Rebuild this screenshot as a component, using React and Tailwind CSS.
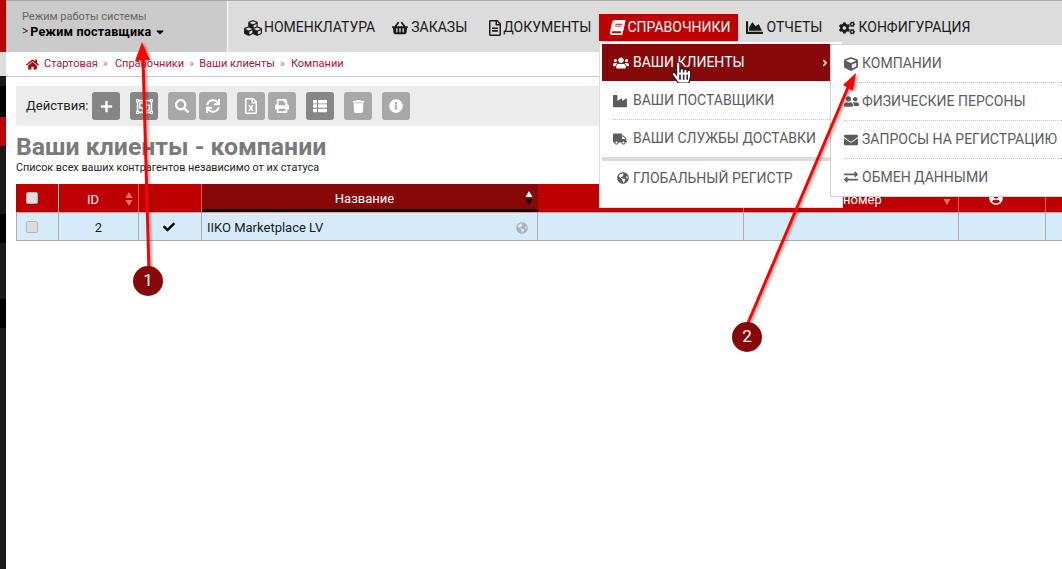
import React from "react";
import { FaHome, FaPlus, FaSearch, FaSync, FaRegFileExcel, FaPrint, FaThList, FaTrash, FaInfoCircle, FaCubes, FaShoppingBasket, FaRegFileAlt, FaBook, FaChartArea, FaCogs, FaUsers, FaIndustry, FaTruck, FaGlobeAmericas, FaCube, FaUserFriends, FaEnvelope, FaExchangeAlt, FaCheck, FaCaretDown, FaHandPointer, FaRegObjectGroup, FaUserCircle, FaAngleRight } from "react-icons/fa";

const font = { fontFamily: "Roboto, sans-serif" };

function Tool({ icon: I, dark, ml, size = "text-[14px]" }) {
  return (
    <div className={`w-7 h-7 rounded-[3px] flex items-center justify-center text-white ${size} ${dark ? "bg-[#868686]" : "bg-[#a8a8a8]"} ${ml}`}>
      <I />
    </div>
  );
}

function Nav({ icon: I, label, active, ml, iw, iconCls = "text-[16px]" }) {
  return (
    <div className={`h-[27px] flex items-center text-[14px] ${active ? "bg-[#bd0000] text-white pl-[11px] pr-[7px]" : "text-[#1a1a1a]"} ${ml}`}>
      <span className={`flex justify-start shrink-0 ${iw}`}>
        <I className={iconCls} />
      </span>
      <span>{label}</span>
    </div>
  );
}

function MenuItem({ icon: I, label, iw = "w-[20px]", size = "text-[14px]", active, cls = "h-[38px]" }) {
  return (
    <div className={`flex items-center text-[14px] ${active ? "text-white" : "text-[#5c5c5c] border-b border-dotted border-[#c4c4c4]"} ${cls}`}>
      <span className={`shrink-0 flex ${iw}`}><I className={size} /></span>
      <span className="whitespace-nowrap">{label}</span>
    </div>
  );
}

function Sort({ up = "#f07070", down = "#f07070" }) {
  return (
    <svg width="8" height="14" viewBox="0 0 8 14" className="shrink-0">
      <polygon points="4,0 7.5,6 0.5,6" fill={up} />
      <polygon points="4,14 7.5,8 0.5,8" fill={down} />
    </svg>
  );
}

function Box() {
  return <span className="block w-3 h-3 rounded-[2px] bg-[#dddddd] border border-[#b5b5b5]" />;
}

export default function App() {
  return (
    <div className="relative w-[1062px] h-[569px] overflow-hidden bg-white flex" style={font}>
      {/* Sidebar strip */}
      <div className="w-[6px] h-full bg-[#1a1a1a] flex flex-col shrink-0">
        <div className="h-[52px] bg-[#bd0000]" />
        <div className="h-[24px] bg-[#dcdcdc]" />
        <div className="h-[10px] bg-[#1a1a1a]" />
        <div className="h-[31px] bg-black" />
        <div className="h-[29px] bg-[#bd0000]" />
        <div className="h-[68px] bg-[#1a1a1a]" />
        <div className="h-[29px] bg-black" />
        <div className="h-[56px] bg-[#1a1a1a]" />
        <div className="h-[29px] bg-black" />
      </div>

      <div className="flex-1 flex flex-col min-w-0">
        {/* Top bar */}
        <div className="h-[52px] flex bg-[#dcdcdc] border-t border-[#a8a8a8] shrink-0">
          <div className="w-[222px] bg-[#cbcbcb] border-r border-white pl-[16px] pt-[9px] shrink-0">
            <div className="text-[11px] leading-[14px] text-[#666666]">Режим работы системы</div>
            <div className="flex items-center text-[12.5px] leading-[15px] text-black">
              <span className="mr-[2px] font-light text-[12px]">&gt;</span>
              <span className="font-bold tracking-[0.2px]">Режим поставщика</span>
              <FaCaretDown className="ml-[3px] text-[12px]" />
            </div>
          </div>
          <div className="flex items-start pt-[13px] pl-[16px]">
            <Nav icon={FaCubes} label="НОМЕНКЛАТУРА" iw="w-[20px]" iconCls="text-[18px]" />
            <Nav icon={FaShoppingBasket} label="ЗАКАЗЫ" iw="w-[19px]" ml="ml-[17px]" />
            <Nav icon={FaRegFileAlt} label="ДОКУМЕНТЫ" iw="w-[16px]" ml="ml-[20px]" />
            <Nav icon={FaBook} label="СПРАВОЧНИКИ" iw="w-[17px]" ml="ml-[8px]" iconCls="text-[15px] -skew-x-12" active />
            <Nav icon={FaChartArea} label="ОТЧЕТЫ" iw="w-[21px]" ml="ml-[8px]" iconCls="text-[17px]" />
            <Nav icon={FaCogs} label="КОНФИГУРАЦИЯ" iw="w-[19px]" ml="ml-[17px]" />
          </div>
        </div>

        {/* Breadcrumb */}
        <div className="h-[25px] border-b border-[#c8c8c8] flex items-center pl-[20px] text-[11px] text-[#a8123a] shrink-0">
          <FaHome className="text-[13px] text-[#a01010] mr-[5px]" />
          <span>Стартовая</span>
          <span className="mx-[5px] text-[#c08080]">»</span>
          <span className="ml-[2px]">Справочники</span>
          <span className="mx-[5px] text-[#c08080]">»</span>
          <span>Ваши клиенты</span>
          <span className="mx-[5px] text-[#c08080]">»</span>
          <span className="ml-px">Компании</span>
        </div>

        {/* Toolbar */}
        <div className="ml-[10px] mr-[6px] mt-[9px] h-[40px] bg-[#ececec] flex items-center pl-[10px] shrink-0">
          <span className="text-[13px] text-[#222222] mr-[4px]">Действия:</span>
          <Tool icon={FaPlus} dark size="text-[13px]" />
          <Tool icon={FaRegObjectGroup} dark ml="ml-[10px]" size="text-[17px]" />
          <Tool icon={FaSearch} ml="ml-[10px]" />
          <Tool icon={FaSync} ml="ml-[3px]" />
          <Tool icon={FaRegFileExcel} ml="ml-[10px]" size="text-[16px]" />
          <Tool icon={FaPrint} ml="ml-[3px]" />
          <Tool icon={FaThList} dark ml="ml-[10px]" />
          <Tool icon={FaTrash} ml="ml-[10px]" size="text-[13px]" />
          <Tool icon={FaInfoCircle} ml="ml-[10px]" />
        </div>

        {/* Title */}
        <div className="ml-[10px] mt-[7px] text-[24.8px] leading-[28px] font-bold text-[#7a7a7a]">Ваши клиенты - компании</div>
        <div className="ml-[10px] text-[10.8px] leading-[13px] text-[#222222]">Список всех ваших контрагентов независимо от их статуса</div>

        {/* Table */}
        <div className="ml-[10px] mt-[10px] text-[13px]">
          <div className="h-[29px] flex bg-[#bd0000] text-white border-b border-[#d8a0a0]">
            <div className="w-[43px] flex items-center pl-[10px] border-r border-[#f0c0c0]"><Box /></div>
            <div className="w-[80px] flex items-center pl-[28px] pt-[3px] border-r border-[#e06060] relative">
              <span>ID</span>
              <span className="absolute left-[66px] top-[8px]"><Sort /></span>
            </div>
            <div className="w-[63px] border-r border-[#e06060]" />
            <div className="w-[336px] bg-[#870808] border-b-[3px] border-black flex items-center justify-center pt-[4px] pr-[11px] relative">
              <span>Название</span>
              <span className="absolute right-[5px] top-[7px]"><Sort up="#ffffff" down="#000000" /></span>
            </div>
            <div className="w-[206px] border-r border-[#e06060]" />
            <div className="w-[215px] border-r border-[#e06060] flex items-center pl-[99px] pt-[3px] relative">
              <span>номер</span>
              <span className="absolute right-[7px] top-[7px]"><Sort /></span>
            </div>
            <div className="w-[87px] border-r border-[#e06060] flex items-center pl-[30px]"><FaUserCircle className="text-[14px] text-white" /></div>
            <div className="flex-1" />
          </div>
          <div className="h-[28px] flex bg-[#d6ebf9] text-[#1a1a1a] border-b border-l border-[#ababab]">
            <div className="w-[42px] flex items-center pl-[9px] border-r border-[#ababab]"><Box /></div>
            <div className="w-[80px] flex items-center justify-center pt-[2px] border-r border-[#ababab]">2</div>
            <div className="w-[63px] flex items-center pl-[24px] border-r border-[#ababab] text-[12px] text-black"><FaCheck /></div>
            <div className="w-[336px] flex items-center justify-between pl-[5px] pr-[9px] pt-[2px] border-r border-[#ababab]">
              <span>IIKO Marketplace LV</span>
              <FaGlobeAmericas className="text-[12px] text-[#b0b0b0]" />
            </div>
            <div className="w-[206px] border-r border-[#ababab]" />
            <div className="w-[215px] border-r border-[#ababab]" />
            <div className="w-[87px] border-r border-[#ababab]" />
            <div className="flex-1" />
          </div>
        </div>
      </div>

      {/* Dropdown level 1 */}
      <div className="absolute left-[599px] top-[42px] w-[244px] h-[166px] bg-white border-x border-b border-[#dddddd] pl-[2px] pr-[12px] pt-[2px]">
        <div className="relative h-[37px] bg-[#870808] pl-[11px]">
          <MenuItem icon={FaUsers} label="ВАШИ КЛИЕНТЫ" active cls="h-[37px]" size="text-[16px]" />
          <FaAngleRight className="absolute right-0 top-[14px] text-[10px] text-white" />
        </div>
        <div className="pl-[11px]"><MenuItem icon={FaIndustry} label="ВАШИ ПОСТАВЩИКИ" cls="h-[39px] pt-px" /></div>
        <div className="pl-[11px]"><MenuItem icon={FaTruck} label="ВАШИ СЛУЖБЫ ДОСТАВКИ" cls="h-[37px] border-b-0" /></div>
        <div className="h-[4px] bg-[#dcdcdc]" />
        <div className="pl-[15px] h-[34px] flex items-center text-[14px] text-[#5c5c5c]">
          <span className="w-[16px] flex"><FaGlobeAmericas className="text-[12px]" /></span>
          <span>ГЛОБАЛЬНЫЙ РЕГИСТР</span>
        </div>
      </div>

      {/* Dropdown level 2 */}
      <div className="absolute left-[830px] top-[44px] w-[240px] h-[153px] bg-white border-l border-b border-t border-[#cfcfcf] pl-[13px]">
        <MenuItem icon={FaCube} label="КОМПАНИИ" iw="w-[18px]" />
        <MenuItem icon={FaUserFriends} label="ФИЗИЧЕСКИЕ ПЕРСОНЫ" iw="w-[18px]" size="text-[15px]" />
        <MenuItem icon={FaEnvelope} label="ЗАПРОСЫ НА РЕГИСТРАЦИЮ" iw="w-[18px]" />
        <MenuItem icon={FaExchangeAlt} label="ОБМЕН ДАННЫМИ" iw="w-[18px]" cls="h-[36px] border-b-0" />
      </div>

      {/* Cursor */}
      <FaHandPointer className="absolute left-[671px] top-[62px] text-[21px] text-white" style={{ stroke: "#222", strokeWidth: 30 }} />

      {/* Annotation arrows */}
      <svg className="absolute inset-0 pointer-events-none" width="1062" height="569">
        <defs>
          <filter id="sh" x="-20%" y="-20%" width="140%" height="140%">
            <feDropShadow dx="2" dy="1" stdDeviation="1.2" floodColor="#000" floodOpacity="0.3" />
          </filter>
        </defs>
        <g filter="url(#sh)">
          <line x1="149" y1="272" x2="143" y2="58" stroke="#ff0000" strokeWidth="3" />
          <polygon points="142,42 135,61 150,60" fill="#ff0000" />
          <line x1="745" y1="330" x2="849" y2="85" stroke="#ff0000" strokeWidth="3" />
          <polygon points="856,73 843,85 853,91" fill="#ff0000" />
        </g>
        <circle cx="148" cy="281" r="15" fill="#870808" />
        <circle cx="747" cy="337" r="15" fill="#870808" />
      </svg>
      <div className="absolute left-[133px] top-[266px] w-[30px] h-[30px] flex items-center justify-center text-white text-[17px]">1</div>
      <div className="absolute left-[732px] top-[322px] w-[30px] h-[30px] flex items-center justify-center text-white text-[17px]">2</div>
    </div>
  );
}
